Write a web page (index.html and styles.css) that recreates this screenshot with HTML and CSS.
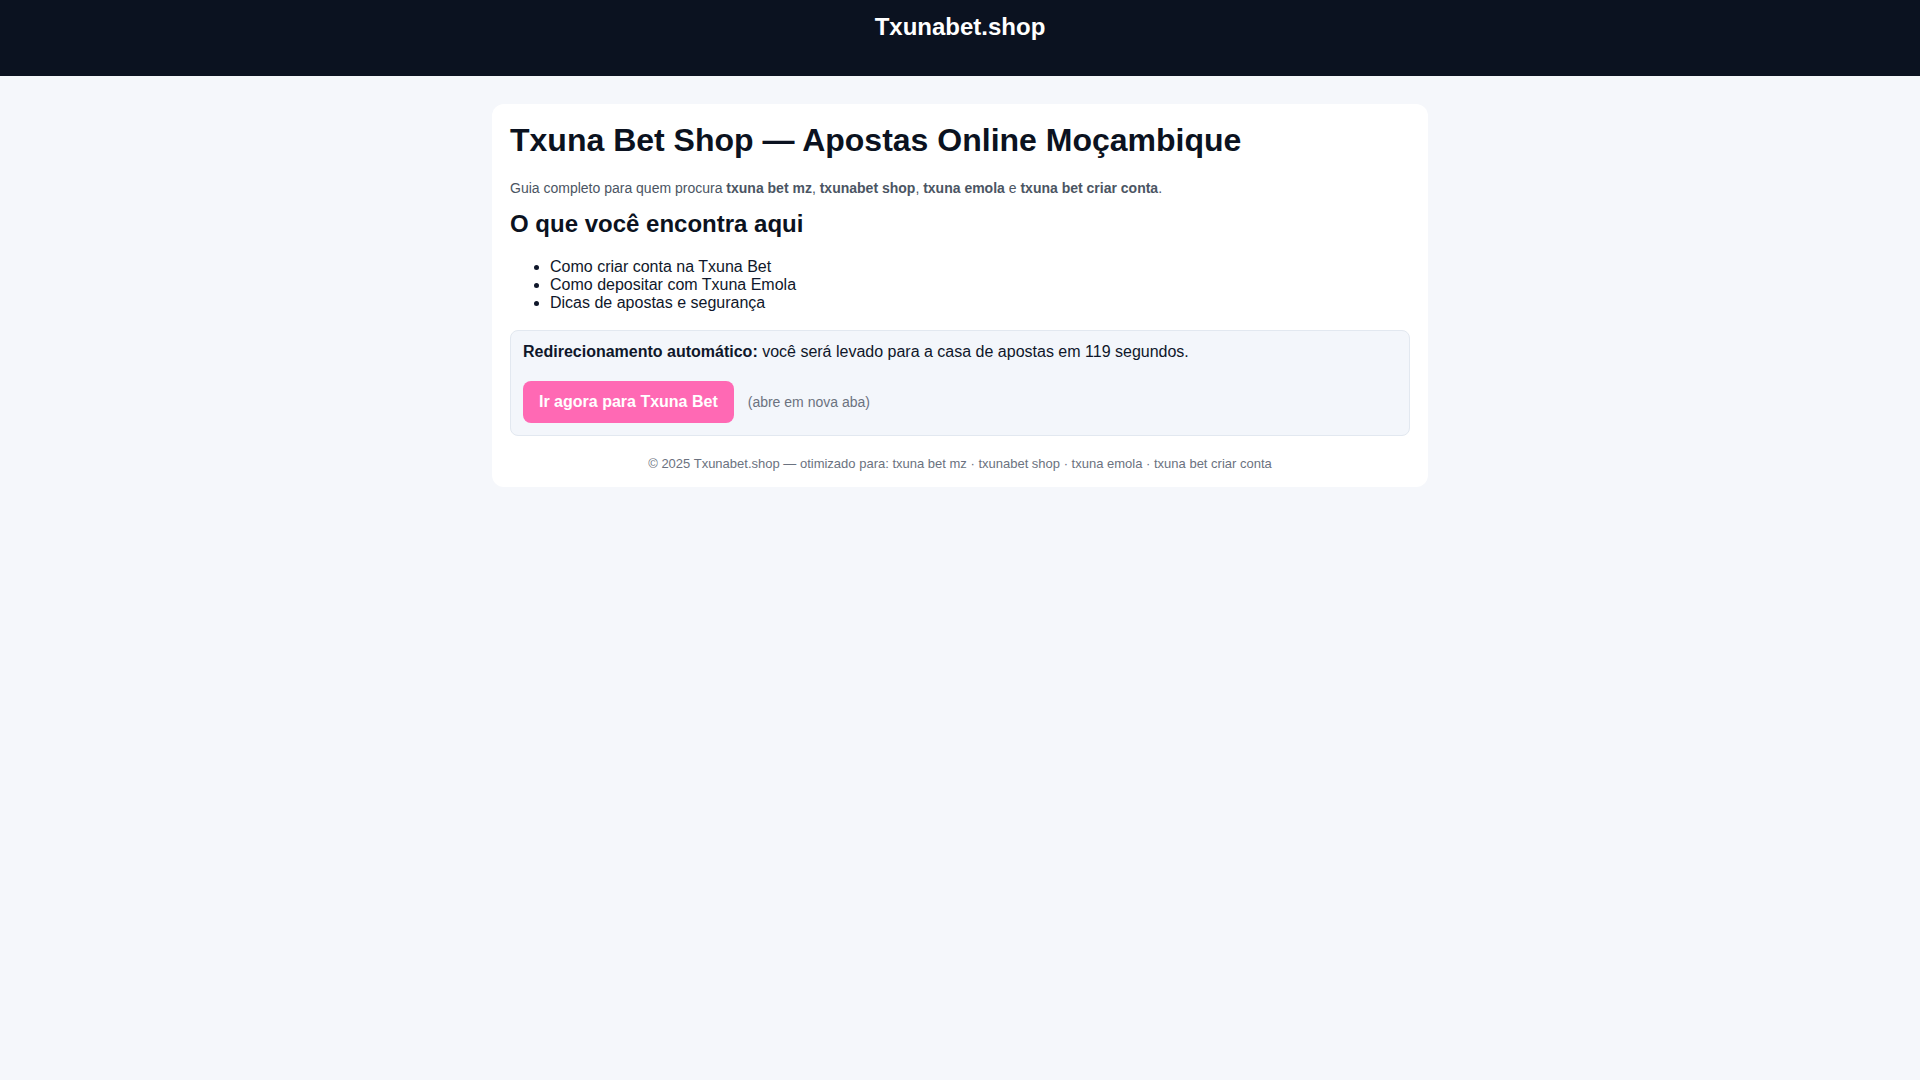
FILE: index.html
```html
<!DOCTYPE html>
<html lang="pt">
<head>
    <meta charset="UTF-8">
    <meta name="viewport" content="width=device-width, initial-scale=1.0">
    <title>Txuna Bet Shop — Apostas Online Moçambique</title>
    <link rel="stylesheet" href="styles.css">
</head>
<body>
    <header class="topo">
        <div class="marca">Txunabet.shop</div>
    </header>
    <main class="card">
        <h1>Txuna Bet Shop — Apostas Online Moçambique</h1>
        <p class="intro">Guia completo para quem procura <strong>txuna bet mz</strong>, <strong>txunabet shop</strong>, <strong>txuna emola</strong> e <strong>txuna bet criar conta</strong>.</p>
        <h2>O que você encontra aqui</h2>
        <ul>
            <li>Como criar conta na Txuna Bet</li>
            <li>Como depositar com Txuna Emola</li>
            <li>Dicas de apostas e segurança</li>
        </ul>
        <div class="redirect">
            <p><strong>Redirecionamento automático:</strong> você será levado para a casa de apostas em <span id="segundos">119</span> segundos.</p>
            <div class="acoes">
                <a class="botao" href="#" target="_blank">Ir agora para Txuna Bet</a>
                <span class="nota">(abre em nova aba)</span>
            </div>
        </div>
        <footer class="rodape">© 2025 Txunabet.shop — otimizado para: txuna bet mz · txunabet shop · txuna emola · txuna bet criar conta</footer>
    </main>
</body>
</html>
```

FILE: styles.css
```css
body {
    font-family: 'Liberation Sans', Arial, sans-serif;
    background-color: #f5f7fb;
    color: #0f172a;
    margin: 0;
    padding: 0;
}

.topo {
    background-color: #0b1220;
    color: #fff;
    text-align: center;
    padding: 13px 0 35px;
}

.marca {
    font-size: 24px;
    font-weight: bold;
}

.card {
    display: block;
    max-width: 900px;
    margin: 28px auto;
    padding: 18px 18px 16px;
    background-color: #fff;
    border-radius: 12px;
}

h1 {
    font-size: 32px;
    margin: 0 0 21px;
    color: #0b1220;
}

.intro {
    font-size: 14px;
    color: #4b5563;
    margin: 0 0 14px;
}

h2 {
    font-size: 24px;
    margin: 0 0 20px;
    color: #0b1220;
}

ul {
    margin: 0 0 18px;
    padding-left: 40px;
    font-size: 16px;
}

.redirect {
    background-color: #f3f6fb;
    border: 1px solid #e2e8f0;
    border-radius: 8px;
    padding: 12px;
}

.redirect p {
    margin: 0 0 20px;
    font-size: 16px;
}

.acoes {
    display: flex;
    align-items: center;
    gap: 14px;
}

.botao {
    background-color: #ff69b4;
    color: #fff;
    font-weight: bold;
    font-size: 16px;
    text-decoration: none;
    padding: 12px 16px;
    border-radius: 8px;
}

.nota {
    font-size: 14px;
    color: #6b7280;
}

.rodape {
    margin-top: 20px;
    text-align: center;
    font-size: 13px;
    color: #6b7280;
}
```
